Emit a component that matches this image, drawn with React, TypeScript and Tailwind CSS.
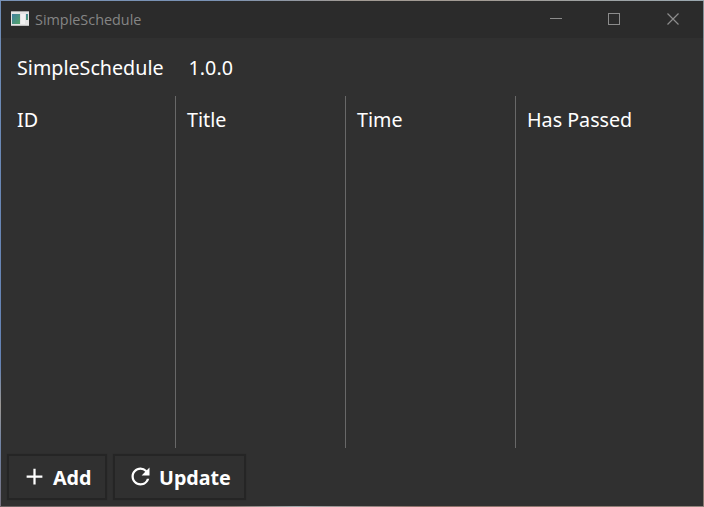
import type { ReactNode } from "react";

const columns = [
  { label: "ID", width: "w-[174px] pl-4" },
  { label: "Title", width: "w-[170px] pl-[11px] border-l" },
  { label: "Time", width: "w-[170px] pl-[11px] border-l" },
  { label: "Has Passed", width: "flex-1 pl-[11px] border-l" },
];

function AppIcon() {
  return (
    <svg width="18" height="15" viewBox="0 0 18 15" className="-mt-[2px] shrink-0" shapeRendering="crispEdges">
      <defs>
        <linearGradient id="pane" x1="0" y1="0" x2="1" y2="1">
          <stop offset="0" stopColor="#3f7fa0" />
          <stop offset="1" stopColor="#55a568" />
        </linearGradient>
      </defs>
      <rect width="18" height="15" fill="#e4e4e4" />
      <rect width="18" height="1" fill="#a9a9a9" />
      <rect y="14" width="18" height="1" fill="#bdbdbd" />
      <rect x="1" y="3" width="8" height="10" fill="url(#pane)" />
      <rect x="10" y="3" width="4" height="10" fill="#f1f1f1" />
      <rect x="15" y="3" width="2" height="6" fill="url(#pane)" />
    </svg>
  );
}

function TitleBar() {
  return (
    <header className="flex h-[37px] shrink-0 items-center bg-[#2b2b2b] pl-[10px]">
      <AppIcon />
      <span className="ml-[6px] font-['Open_Sans',sans-serif] text-[14.4px] leading-5 text-[#858585]">
        SimpleSchedule
      </span>
      <div className="ml-auto flex items-center text-[#8c8c8c]">
        <svg width="59" height="37" viewBox="0 0 59 37" fill="none" stroke="currentColor">
          <path d="M23 17.5h12" />
        </svg>
        <svg width="58" height="37" viewBox="0 0 58 37" fill="none" stroke="currentColor">
          <rect x="22.5" y="12.5" width="11" height="11" />
        </svg>
        <svg width="59" height="37" viewBox="0 0 59 37" fill="none" stroke="currentColor" strokeWidth="1.2">
          <path d="M23.5 12.5l11 11M34.5 12.5l-11 11" />
        </svg>
      </div>
    </header>
  );
}

function ActionButton({ icon, label, width }: { icon: string; label: ReactNode; width: string }) {
  return (
    <button
      className={`flex h-[46px] items-center border-2 border-[#252525] bg-[#303030] pl-[12px] shadow-[0_0_1px_#292929] ${width}`}
    >
      <svg width="27" height="27" viewBox="0 0 24 24" fill="currentColor" className="-mt-px">
        <path d={icon} />
      </svg>
      <span className="ml-[5px] text-[19.7px] font-bold leading-[27px]">{label}</span>
    </button>
  );
}

export default function App() {
  return (
    <div className="h-[507px] w-[704px] bg-[linear-gradient(180deg,#6f8cb5_0%,#6482b4_72%,#9b9792_80%,#6f83a6_88%,#77717f_100%)] font-['Noto_Sans',sans-serif] text-white">
      <div className="h-full bg-[linear-gradient(90deg,#7992b5_0%,#7992b5_30%,#a29b94_50%,#a29b94_68%,#9aa8b0_100%)] bg-[length:100%_1px] bg-no-repeat">
        <div className="h-full bg-[linear-gradient(90deg,#6b6262_0%,#8d7b75_33%,#a3a8aa_42%,#8d6f67_60%,#91847c_100%)] bg-[length:100%_1px] bg-bottom bg-no-repeat p-px">
          <div className="-mr-px h-full bg-[linear-gradient(180deg,#839095_0%,#5d7984_45%,#8e8681_60%,#86776f_100%)] pr-px">
            <div className="flex h-full flex-col bg-[#303030]">
              <TitleBar />
              <div className="flex h-[58px] shrink-0 items-center gap-[25px] pl-4 text-[19.7px] leading-[27px]">
                <span>SimpleSchedule</span>
                <span>1.0.0</span>
              </div>
              <div className="flex h-[352px] shrink-0 text-[19.7px] leading-[27px]">
                {columns.map(({ label, width }) => (
                  <div key={label} className={`shrink-0 border-[#686868] pt-[10px] ${width}`}>
                    {label}
                  </div>
                ))}
              </div>
              <div className="flex gap-[6px] pl-[6px] pt-[6px]">
                <ActionButton icon="M19 13h-6v6h-2v-6H5v-2h6V5h2v6h6v2z" label="Add" width="w-[100px]" />
                <ActionButton
                  icon="M17.65 6.35A7.958 7.958 0 0 0 12 4c-4.42 0-7.99 3.58-7.99 8s3.57 8 7.99 8c3.73 0 6.84-2.55 7.73-6h-2.08A5.99 5.99 0 0 1 12 18c-3.31 0-6-2.69-6-6s2.69-6 6-6c1.66 0 3.14.69 4.22 1.78L13 11h7V4l-2.35 2.35z"
                  label="Update"
                  width="w-[133px]"
                />
              </div>
            </div>
          </div>
        </div>
      </div>
    </div>
  );
}
